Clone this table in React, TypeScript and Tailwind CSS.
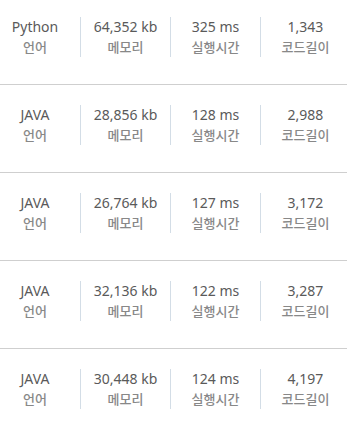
const rows = [
  { lang: "Python", memory: "64,352 kb", time: "325 ms", length: "1,343" },
  { lang: "JAVA", memory: "28,856 kb", time: "128 ms", length: "2,988" },
  { lang: "JAVA", memory: "26,764 kb", time: "127 ms", length: "3,172" },
  { lang: "JAVA", memory: "32,136 kb", time: "122 ms", length: "3,287" },
  { lang: "JAVA", memory: "30,448 kb", time: "124 ms", length: "4,197" },
];

function Cell({ value, label, divider }: { value: string; label: string; divider?: boolean }) {
  return (
    <div className={"flex flex-col items-center " + (divider ? "border-l border-[#d3dde6]" : "")}>
      <span className="text-[14px] leading-[20px] text-[#5a5a5a]">{value}</span>
      <span className="text-[13px] leading-[20px] font-medium text-[#888]">{label}</span>
    </div>
  );
}

export default function App() {
  return (
    <div
      className="w-[347px] h-[423px] overflow-hidden bg-white"
      style={{ fontFamily: '"Noto Sans", "Noto Sans CJK KR", sans-serif' }}
    >
      {rows.map((r, i) => (
        <div
          key={i}
          className={i === 0 ? "pt-[17px] pb-[27px]" : "border-t border-[#cfcfcf] pt-[20px] pb-[27px]"}
        >
          <div className="ml-[-10px] grid grid-cols-[90px_90px_90px_90px]">
            <Cell value={r.lang} label="언어" />
            <Cell value={r.memory} label="메모리" divider />
            <Cell value={r.time} label="실행시간" divider />
            <Cell value={r.length} label="코드길이" divider />
          </div>
        </div>
      ))}
    </div>
  );
}
